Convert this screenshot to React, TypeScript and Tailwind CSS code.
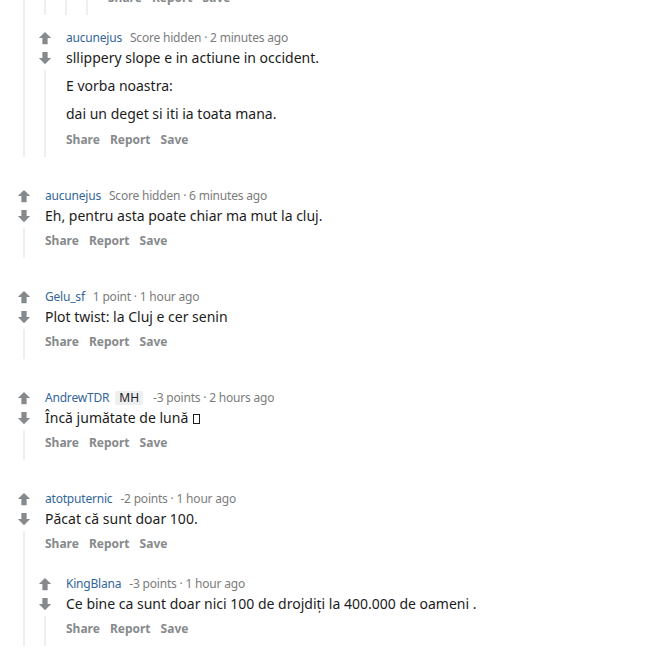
import React from "react";

type CommentData = {
  author: string;
  flair?: string;
  score: string;
  age: string;
  body: React.ReactNode[];
  replies?: CommentData[];
};

const ArrowIcon = ({ down = false }: { down?: boolean }) => (
  <svg
    viewBox="0 0 16 16"
    className={down ? "h-[14px] w-[14px] rotate-180" : "h-[14px] w-[14px]"}
    fill="#878a8c"
  >
    <path d="M8 1 L15 8 H11 V15 H5 V8 H1 Z" />
  </svg>
);

const Comment = ({ c, first = false, top = false }: { c: CommentData; first?: boolean; top?: boolean }) => {
  // top level comments sit further apart than nested ones
  const gap = first ? "" : top ? "mt-[28px]" : "mt-[12px]";
  const multi = c.body.length > 1;
  return (
    <div className={`flex ${gap}`}>
      {/* vote column + thread line */}
      <div className="flex w-[24px] shrink-0 flex-col items-center">
        <div className="flex h-[20px] items-center pt-[1px]">
          <ArrowIcon />
        </div>
        <div className="flex h-[21px] items-center">
          <ArrowIcon down />
        </div>
        <div className="mt-[2px] w-[2px] flex-1 bg-[#edeff1]" />
      </div>

      <div className="min-w-0 flex-1 pl-[9px]">
        {/* meta */}
        <div className="flex h-[20px] items-center whitespace-nowrap pt-[2px] text-[12px] leading-[18px] tracking-[-0.2px]">
          <span className="text-[#336699]">{c.author}</span>
          {c.flair && (
            <span className="ml-[6px] rounded-[2px] bg-[#edeff1] px-[4px] text-[12px] leading-[14px] tracking-normal text-[#1c1c1c]">
              {c.flair}
            </span>
          )}
          <span className={c.flair ? "ml-[10px] text-[#7c7c7c]" : "ml-[8px] text-[#7c7c7c]"}>
            {c.score} · {c.age}
          </span>
        </div>

        {/* body */}
        <div className="flex flex-col gap-[7px] text-[14px] leading-[21px] text-[#1c1c1c]">
          {c.body.map((p, i) => (
            <p key={i} className="whitespace-nowrap">
              {p}
            </p>
          ))}
        </div>

        {/* actions */}
        <div className={multi ? "pb-[3px] pt-[2px]" : "pb-[3px] pt-[1px]"}>
          <div className="flex h-[28px] items-center gap-[10px] text-[12px] font-bold text-[#878a8c]">
            <span>Share</span>
            <span>Report</span>
            <span>Save</span>
          </div>
        </div>

        {c.replies && (
          <div className="-ml-[12px] mt-[12px]">
            {c.replies.map((r, i) => (
              <Comment key={i} c={r} first={i === 0} />
            ))}
          </div>
        )}
      </div>
    </div>
  );
};

const Tofu = () => (
  <span className="ml-[5px] inline-block h-[10px] w-[7px] border border-[#1c1c1c] align-[-1px]" />
);

const comments: CommentData[] = [
  {
    author: "aucunejus",
    score: "Score hidden",
    age: "12 minutes ago",
    body: ["Cluj."],
    replies: [
      {
        author: "aucunejus",
        score: "Score hidden",
        age: "10 minutes ago",
        body: ["Da."],
        replies: [
          {
            author: "aucunejus",
            score: "Score hidden",
            age: "8 minutes ago",
            body: ["Da."],
            replies: [
              {
                author: "aucunejus",
                score: "Score hidden",
                age: "4 minutes ago",
                body: ["Da."],
              },
            ],
          },
        ],
      },
      {
        author: "aucunejus",
        score: "Score hidden",
        age: "2 minutes ago",
        body: [
          "sllippery slope e in actiune in occident.",
          "E vorba noastra:",
          "dai un deget si iti ia toata mana.",
        ],
      },
    ],
  },
  {
    author: "aucunejus",
    score: "Score hidden",
    age: "6 minutes ago",
    body: ["Eh, pentru asta poate chiar ma mut la cluj."],
  },
  {
    author: "Gelu_sf",
    score: "1 point",
    age: "1 hour ago",
    body: ["Plot twist: la Cluj e cer senin"],
  },
  {
    author: "AndrewTDR",
    flair: "MH",
    score: "-3 points",
    age: "2 hours ago",
    body: [
      <>
        Încă jumătate de lună
        <Tofu />
      </>,
    ],
  },
  {
    author: "atotputernic",
    score: "-2 points",
    age: "1 hour ago",
    body: ["Păcat că sunt doar 100."],
    replies: [
      {
        author: "KingBlana",
        score: "-3 points",
        age: "1 hour ago",
        body: ["Ce bine ca sunt doar nici 100 de drojdiți la 400.000 de oameni ."],
      },
    ],
  },
];

export default function App() {
  return (
    <div className="h-[651px] w-full overflow-hidden bg-white font-['Noto_Sans',sans-serif]">
      {/* thread continues from above the fold */}
      <div className="-mt-[313px] pl-[12px]">
        {comments.map((c, i) => (
          <Comment key={i} c={c} first={i === 0} top />
        ))}
      </div>
    </div>
  );
}
